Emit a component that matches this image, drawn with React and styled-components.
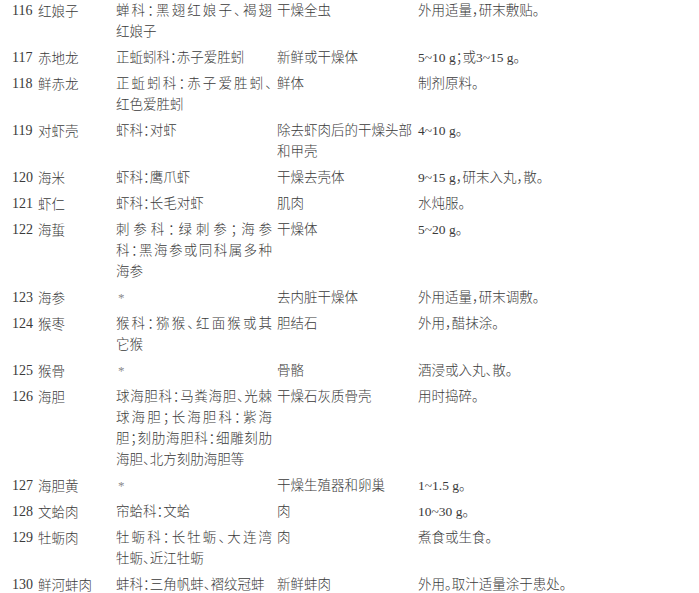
import React from 'react'
import styled, { createGlobalStyle } from 'styled-components'

const GlobalStyle = createGlobalStyle`
  html, body {
    margin: 0;
    padding: 0;
    background: #ffffff;
  }
  body {
    font-family: "Liberation Serif", "Noto Sans CJK SC", serif;
    color: #3a3a3a;
  }
`

const rows = [
  { no: '116', name: '红娘子', origin: ['蝉科：黑翅红娘子、褐翅', '红娘子'], part: ['干燥全虫'], usage: '外用适量，研末敷贴。' },
  { no: '117', name: '赤地龙', origin: ['正蚯蚓科：赤子爱胜蚓'], part: ['新鲜或干燥体'], usage: '5~10 g；或3~15 g。' },
  { no: '118', name: '鲜赤龙', origin: ['正蚯蚓科：赤子爱胜蚓、', '红色爱胜蚓'], part: ['鲜体'], usage: '制剂原料。' },
  { no: '119', name: '对虾壳', origin: ['虾科：对虾'], part: ['除去虾肉后的干燥头部', '和甲壳'], usage: '4~10 g。' },
  { no: '120', name: '海米', origin: ['虾科：鹰爪虾'], part: ['干燥去壳体'], usage: '9~15 g，研末入丸，散。' },
  { no: '121', name: '虾仁', origin: ['虾科：长毛对虾'], part: ['肌肉'], usage: '水炖服。' },
  { no: '122', name: '海蜇', origin: ['刺参科：绿刺参；海参', '科：黑海参或同科属多种', '海参'], part: ['干燥体'], usage: '5~20 g。' },
  { no: '123', name: '海参', origin: ['*'], part: ['去内脏干燥体'], usage: '外用适量，研末调敷。' },
  { no: '124', name: '猴枣', origin: ['猴科：猕猴、红面猴或其', '它猴'], part: ['胆结石'], usage: '外用，醋抹涂。' },
  { no: '125', name: '猴骨', origin: ['*'], part: ['骨骼'], usage: '酒浸或入丸、散。' },
  { no: '126', name: '海胆', origin: ['球海胆科：马粪海胆、光棘', '球海胆；长海胆科：紫海', '胆；刻肋海胆科：细雕刻肋', '海胆、北方刻肋海胆等'], part: ['干燥石灰质骨壳'], usage: '用时捣碎。' },
  { no: '127', name: '海胆黄', origin: ['*'], part: ['干燥生殖器和卵巢'], usage: '1~1.5 g。' },
  { no: '128', name: '文蛤肉', origin: ['帘蛤科：文蛤'], part: ['肉'], usage: '10~30 g。' },
  { no: '129', name: '牡蛎肉', origin: ['牡蛎科：长牡蛎、大连湾', '牡蛎、近江牡蛎'], part: ['肉'], usage: '煮食或生食。' },
  { no: '130', name: '鲜河蚌肉', origin: ['蚌科：三角帆蚌、褶纹冠蚌'], part: ['新鲜蚌肉'], usage: '外用。取汁适量涂于患处。' },
]

export default function App() {
  return (
    <>
      <GlobalStyle />
      <Table>
        {rows.map((r) => (
          <Row key={r.no}>
            <Num>{r.no}</Num>
            <Name>{r.name}</Name>
            <Origin>
              {r.origin.map((line, i) =>
                line === '*'
                  ? <Star key={i}>*</Star>
                  : <Line key={i} $justify={i < r.origin.length - 1}>{line}</Line>
              )}
            </Origin>
            <Cell>
              {r.part.map((line, i) => <Line key={i}>{line}</Line>)}
            </Cell>
            <Cell>
              <Line>{r.usage}</Line>
            </Cell>
          </Row>
        ))}
      </Table>
    </>
  )
}

const Table = styled.div`
  width: 699px;
  height: 593px;
  overflow: hidden;
  display: flex;
  flex-direction: column;
  gap: 5px;
  box-sizing: border-box;
`

const Row = styled.div`
  display: grid;
  grid-template-columns: 26px 78px 161px 141px 1fr;
  padding-left: 12px;
  font-size: 13.5px;
  line-height: 21px;
`

const Num = styled.div`
  font-family: "Liberation Serif", serif;
  font-size: 14px;
`

const Name = styled.div`
  font-family: "Noto Sans CJK SC", sans-serif;
  font-weight: 300;
`

const Cell = styled.div`
  font-weight: 300;
  white-space: nowrap;
`

const Origin = styled.div`
  width: 156px;
  font-weight: 300;
`

const Line = styled.div`
  white-space: nowrap;
  font-feature-settings: "halt";
  text-align: ${(p) => (p.$justify ? 'justify' : 'left')};
  text-align-last: ${(p) => (p.$justify ? 'justify' : 'auto')};
`

const Star = styled.div`
  color: #8a8a8a;
  font-size: 13px;
  padding-left: 2px;
`
